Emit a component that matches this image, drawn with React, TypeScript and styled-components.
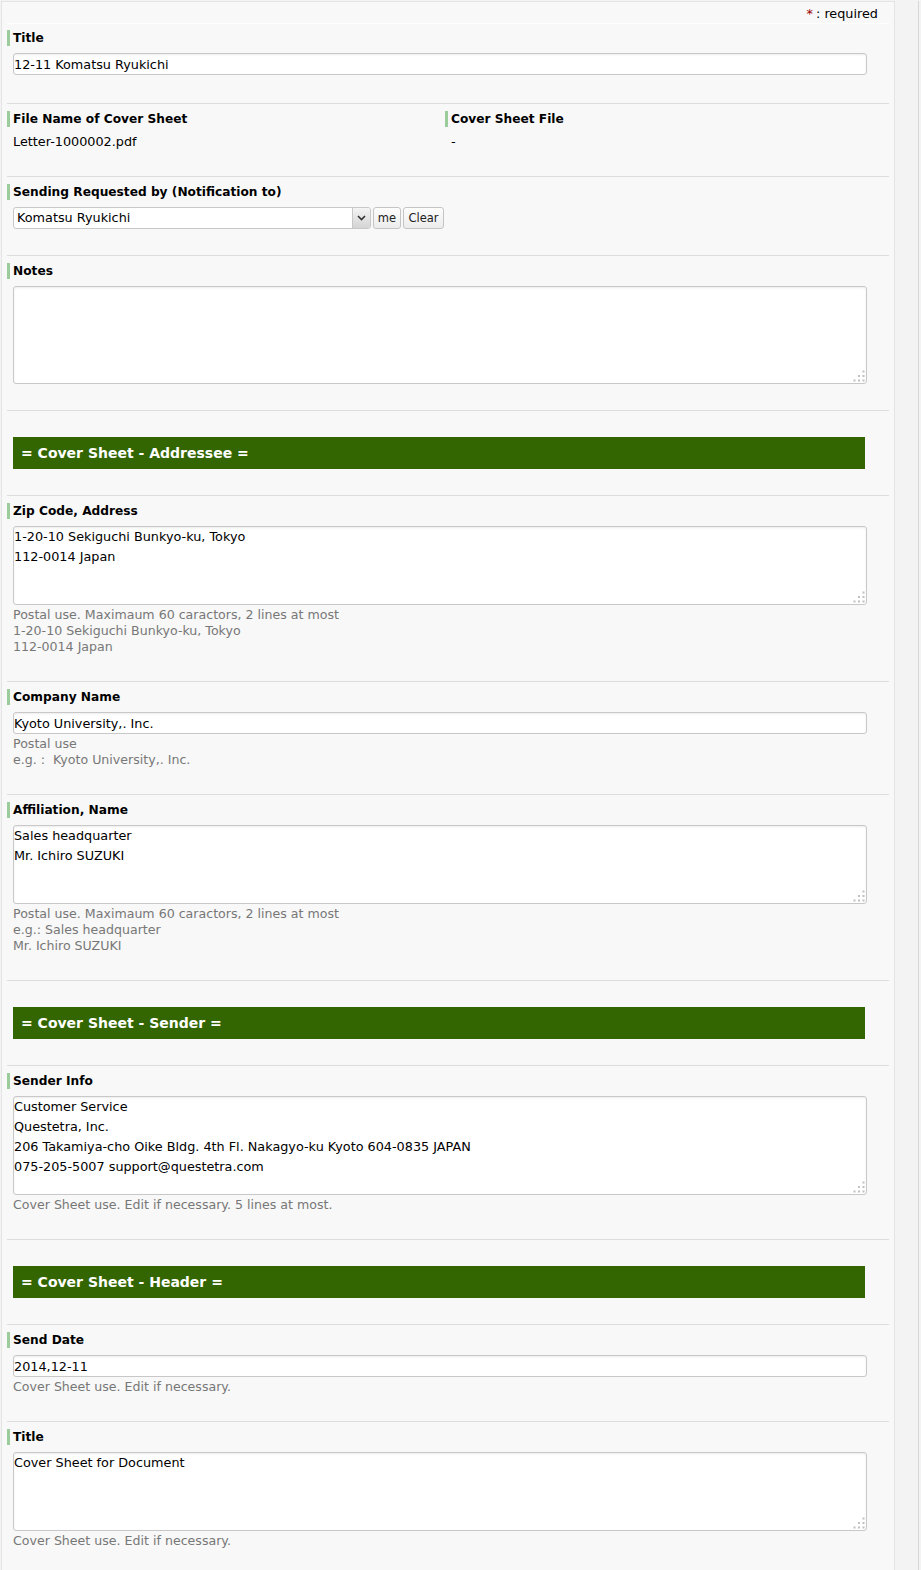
import React from 'react';
import styled, { createGlobalStyle } from 'styled-components';

const GlobalStyle = createGlobalStyle`
  html, body {
    margin: 0;
    padding: 0;
    background: #f3f3f3;
  }
  body {
    font-family: "DejaVu Sans", Verdana, sans-serif;
    font-size: 12.8px;
    color: #000;
  }
`;

const Page = styled.div`
  display: flex;
  align-items: stretch;
  padding: 1px 0 0 1px;
  min-height: 1569px;
`;

const Panel = styled.div`
  width: 894px;
  background: #f8f8f8;
  border: 1px solid #e4e4e4;
  border-bottom: none;
  padding: 0 5px;
  box-sizing: border-box;
`;

const Gutter = styled.div`
  width: 23px;
  border-right: 1px solid #d6d6d6;
`;

const RequiredBar = styled.div`
  height: 21px;
  line-height: 24px;
  text-align: right;
  padding-right: 11px;
  border-bottom: 1px solid #fff;
  font-size: 12.8px;
`;

const Star = styled.span`
  color: #990000;
  margin-right: 3px;
`;

const Row = styled.div<{ $first?: boolean }>`
  border-top: ${p => (p.$first ? 'none' : '1px solid #dddddd')};
  padding: ${p => (p.$first ? '6px 0 28px' : '7px 0 26px')};
`;

const SectionRow = styled.div`
  border-top: 1px solid #dddddd;
  padding: 26px 0 26px 6px;
`;

const SectionBar = styled.div`
  width: 852px;
  height: 32px;
  background: #336600;
  color: #fff;
  font-weight: bold;
  font-size: 14px;
  line-height: 32px;
  padding-left: 8px;
  box-sizing: border-box;
`;

const Columns = styled.div`
  display: grid;
  grid-template-columns: 438px 1fr;
`;

const Label = styled.div`
  border-left: 3px solid #9ccb9c;
  padding-left: 3px;
  height: 16px;
  line-height: 16px;
  font-weight: bold;
  font-size: 12.2px;
  margin-bottom: 7px;
`;

const Value = styled.div`
  padding-left: 6px;
  line-height: 16px;
`;

const FieldWrap = styled.div`
  margin-left: 6px;
  width: 854px;
  position: relative;
`;

const TextInput = styled.input`
  display: block;
  width: 100%;
  height: 22px;
  box-sizing: border-box;
  border: 1px solid #c8c8c8;
  border-radius: 3px;
  box-shadow: inset 0 1px 2px rgba(0, 0, 0, 0.08);
  background: #fff;
  padding: 0;
  font-family: inherit;
  font-size: 12.8px;
  color: #000;
  outline: none;
`;

const TextArea = styled.textarea<{ $h: number }>`
  display: block;
  width: 100%;
  height: ${p => p.$h}px;
  box-sizing: border-box;
  border: 1px solid #c8c8c8;
  border-radius: 3px;
  box-shadow: inset 0 1px 2px rgba(0, 0, 0, 0.08);
  background: #fff;
  padding: 0;
  margin: 0;
  font-family: inherit;
  font-size: 12.8px;
  line-height: 20px;
  color: #000;
  resize: none;
  outline: none;
  overflow: hidden;
`;

const Grip = styled.svg`
  position: absolute;
  right: 2px;
  bottom: 2px;
  width: 12px;
  height: 12px;
`;

const Help = styled.div`
  margin: 2px 0 0 6px;
  color: #777;
  line-height: 16px;
  font-size: 12.6px;
  white-space: pre-wrap;
`;

const PickerRow = styled.div`
  display: flex;
  align-items: center;
  margin-left: 6px;
  gap: 1px;
`;

const Select = styled.div`
  width: 358px;
  height: 22px;
  box-sizing: border-box;
  border: 1px solid #c8c8c8;
  border-radius: 3px;
  background: #fff;
  display: flex;
  align-items: stretch;
  overflow: hidden;
`;

const SelectText = styled.div`
  flex: 1;
  padding-left: 3px;
  line-height: 20px;
  font-size: 12.8px;
`;

const SelectArrow = styled.div`
  width: 17px;
  border-left: 1px solid #c8c8c8;
  background: linear-gradient(#f4f4f4, #d4d4d4);
  display: flex;
  align-items: center;
  justify-content: center;
`;

const SmallButton = styled.button<{ $w: number }>`
  width: ${p => p.$w}px;
  height: 22px;
  border: 1px solid #c4c4c4;
  border-radius: 3px;
  background: linear-gradient(#fdfdfd, #ececec);
  font-family: inherit;
  font-size: 11.5px;
  color: #222;
  padding: 0;
  margin-left: 1px;
`;

const ResizeGrip = () => (
  <Grip viewBox="0 0 12 12">
    <rect x="9.5" y="0.5" width="2" height="2" fill="#c0c0c0" />
    <rect x="5" y="5" width="2" height="2" fill="#c0c0c0" />
    <rect x="9.5" y="5" width="2" height="2" fill="#c0c0c0" />
    <rect x="0.5" y="9.5" width="2" height="2" fill="#c0c0c0" />
    <rect x="5" y="9.5" width="2" height="2" fill="#c0c0c0" />
    <rect x="9.5" y="9.5" width="2" height="2" fill="#c0c0c0" />
  </Grip>
);

const Area = ({ value, h }: { value: string; h: number }) => (
  <FieldWrap>
    <TextArea $h={h} defaultValue={value} />
    <ResizeGrip />
  </FieldWrap>
);

const Input = ({ value }: { value: string }) => (
  <FieldWrap>
    <TextInput defaultValue={value} />
  </FieldWrap>
);

export default function App() {
  return (
    <>
      <GlobalStyle />
      <Page>
        <Panel>
          <RequiredBar>
            <Star>*</Star>: required
          </RequiredBar>

          <Row $first>
            <Label>Title</Label>
            <Input value="12-11 Komatsu Ryukichi" />
          </Row>

          <Row>
            <Columns>
              <div>
                <Label>File Name of Cover Sheet</Label>
                <Value>Letter-1000002.pdf</Value>
              </div>
              <div>
                <Label>Cover Sheet File</Label>
                <Value>-</Value>
              </div>
            </Columns>
          </Row>

          <Row>
            <Label>Sending Requested by (Notification to)</Label>
            <PickerRow>
              <Select>
                <SelectText>Komatsu Ryukichi</SelectText>
                <SelectArrow>
                  <svg width="9" height="6" viewBox="0 0 9 6">
                    <path d="M1 1 L4.5 4.5 L8 1" stroke="#333" strokeWidth="1.6" fill="none" />
                  </svg>
                </SelectArrow>
              </Select>
              <SmallButton $w={28}>me</SmallButton>
              <SmallButton $w={41}>Clear</SmallButton>
            </PickerRow>
          </Row>

          <Row>
            <Label>Notes</Label>
            <Area value="" h={98} />
          </Row>

          <SectionRow>
            <SectionBar>= Cover Sheet - Addressee =</SectionBar>
          </SectionRow>

          <Row>
            <Label>Zip Code, Address</Label>
            <Area value={'1-20-10 Sekiguchi Bunkyo-ku, Tokyo\n112-0014 Japan'} h={79} />
            <Help>{'Postal use. Maximaum 60 caractors, 2 lines at most\n1-20-10 Sekiguchi Bunkyo-ku, Tokyo\n112-0014 Japan'}</Help>
          </Row>

          <Row>
            <Label>Company Name</Label>
            <Input value="Kyoto University,. Inc." />
            <Help>{'Postal use\ne.g. :  Kyoto University,. Inc.'}</Help>
          </Row>

          <Row>
            <Label>Affiliation, Name</Label>
            <Area value={'Sales headquarter\nMr. Ichiro SUZUKI'} h={79} />
            <Help>{'Postal use. Maximaum 60 caractors, 2 lines at most\ne.g.: Sales headquarter\nMr. Ichiro SUZUKI'}</Help>
          </Row>

          <SectionRow>
            <SectionBar>= Cover Sheet - Sender =</SectionBar>
          </SectionRow>

          <Row>
            <Label>Sender Info</Label>
            <Area
              value={'Customer Service\nQuestetra, Inc.\n206 Takamiya-cho Oike Bldg. 4th Fl. Nakagyo-ku Kyoto 604-0835 JAPAN\n075-205-5007 support@questetra.com'}
              h={99}
            />
            <Help>Cover Sheet use. Edit if necessary. 5 lines at most.</Help>
          </Row>

          <SectionRow>
            <SectionBar>= Cover Sheet - Header =</SectionBar>
          </SectionRow>

          <Row>
            <Label>Send Date</Label>
            <Input value="2014,12-11" />
            <Help>Cover Sheet use. Edit if necessary.</Help>
          </Row>

          <Row>
            <Label>Title</Label>
            <Area value="Cover Sheet for Document" h={79} />
            <Help>Cover Sheet use. Edit if necessary.</Help>
          </Row>
        </Panel>
        <Gutter />
      </Page>
    </>
  );
}
